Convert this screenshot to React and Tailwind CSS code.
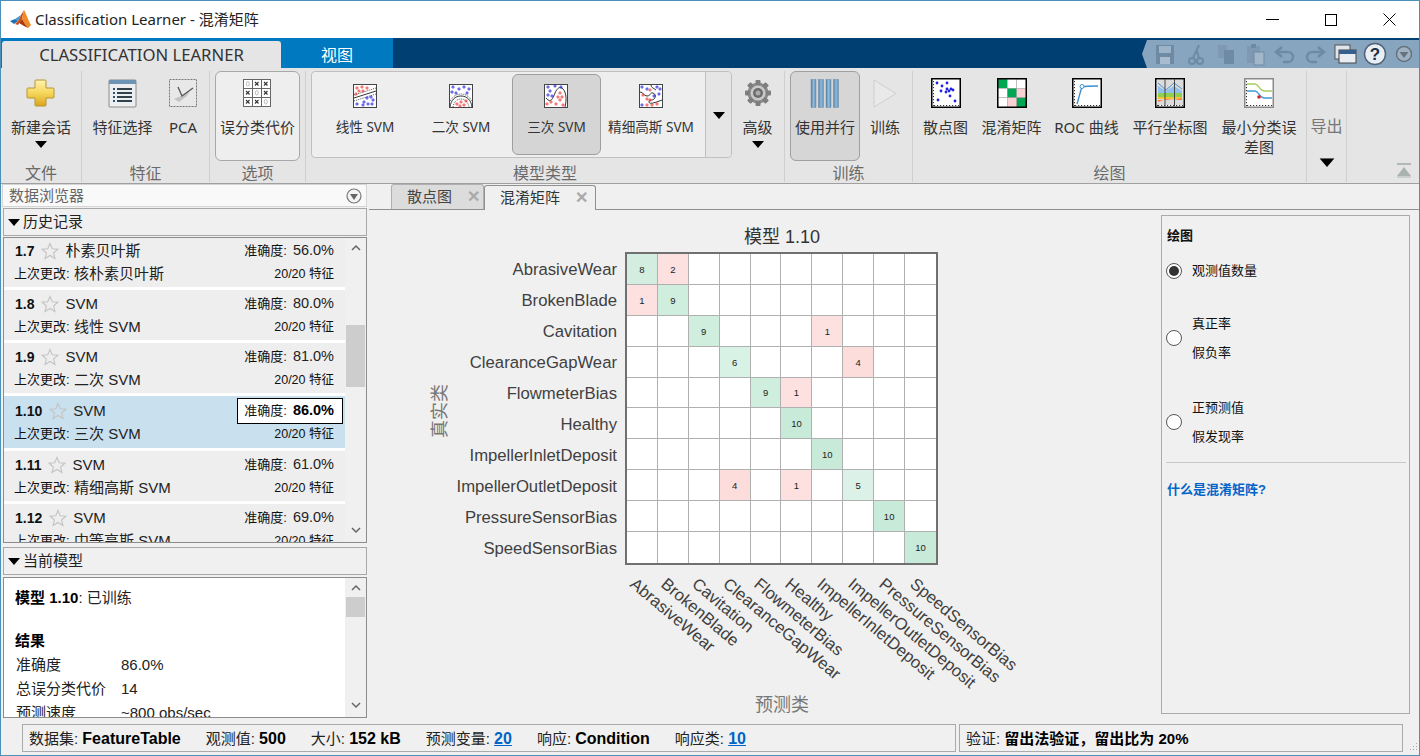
import React from 'react'

const Caret = ({ className = '' }) => (
  <svg width="12" height="7" viewBox="0 0 12 7" className={className}><path d="M0 0h12L6 7z" fill="#000" /></svg>
)

const Dots = ({ pts, color }) => (
  <g fill="none" stroke={color} strokeWidth="0.9">
    {pts.map(([x, y], i) => <circle key={i} cx={x} cy={y} r="1.1" />)}
  </g>
)

const MatlabLogo = () => (
  <svg width="22" height="22" viewBox="0 0 22 22">
    <path d="M0 12l5-2 3 2-4 3z" fill="#1f6fb5" />
    <path d="M5 10l3-2 3-2-3 6z" fill="#3f9ad6" />
    <path d="M8 12l3-6 3-5-2 9-4 6-3-1z" fill="#c9501c" />
    <path d="M14 1c2 3 4 10 7 15l-3 3-3-4-3-5z" fill="#f08a24" />
    <path d="M12 10l3 5 3 4-4-2-5-3z" fill="#a83a12" />
  </svg>
)

const PlusIcon = () => (
  <svg width="30" height="30" viewBox="0 0 30 30">
    <defs>
      <linearGradient id="py" x1="0" y1="0" x2="0" y2="1">
        <stop offset="0" stopColor="#fff3b0" /><stop offset="0.5" stopColor="#f5d75a" /><stop offset="1" stopColor="#d9a520" />
      </linearGradient>
    </defs>
    <path d="M10 2h9a1 1 0 0 1 1 1v7h7a1 1 0 0 1 1 1v8a1 1 0 0 1-1 1h-7v7a1 1 0 0 1-1 1h-9a1 1 0 0 1-1-1v-7H2a1 1 0 0 1-1-1v-8a1 1 0 0 1 1-1h7V3a1 1 0 0 1 1-1z" fill="url(#py)" stroke="#b8962e" />
  </svg>
)

const FeatureIcon = () => (
  <svg width="29" height="29" viewBox="0 0 29 29">
    <rect x="1" y="1" width="27" height="27" rx="1" fill="#eceef0" stroke="#8a8a8a" />
    <rect x="1" y="1" width="27" height="4" fill="#6d94b5" />
    {[9, 13, 17, 21].map((y) => (
      <g key={y}>
        <rect x="5" y={y} width="2" height="2" fill="#26567f" />
        <rect x="9" y={y} width="15" height="2" fill="#33414d" />
      </g>
    ))}
  </svg>
)

const PcaIcon = () => (
  <svg width="28" height="28" viewBox="0 0 28 28">
    <rect x="0.5" y="0.5" width="27" height="27" fill="#e8e8e8" stroke="#777" strokeDasharray="2 1" />
    <path d="M5 20l5 3 8-6 3-5-9 5z" fill="#c4c4c4" />
    <path d="M9 8l4 9 11-8" fill="none" stroke="#5b5b5b" strokeWidth="1.4" />
  </svg>
)

const CostIcon = () => (
  <svg width="28" height="28" viewBox="0 0 28 28">
    <rect x="0.5" y="0.5" width="27" height="27" fill="#fff" stroke="#666" />
    <path d="M9.5 0v28M18.5 0v28M0 9.5h28M0 18.5h28" stroke="#666" />
    {[[0, 1], [0, 2], [1, 0], [1, 2], [2, 0], [2, 1]].map(([r, c]) => (
      <path key={`${r}${c}`} d={`M${3 + c * 9} ${3 + r * 9}l3.5 3.5m0-3.5l-3.5 3.5`} stroke="#333" strokeWidth="1.1" />
    ))}
    {[0, 1, 2].map((i) => <ellipse key={i} cx={4.8 + i * 9} cy={4.8 + i * 9} rx="1.5" ry="2.2" fill="none" stroke="#bbb" />)}
  </svg>
)

const SvmFrame = ({ children }) => (
  <svg width="24" height="24" viewBox="0 0 24 24">
    <rect x="0.5" y="0.5" width="23" height="23" fill="#fff" stroke="#444" />
    {children}
  </svg>
)

const LinearIcon = () => (
  <SvmFrame>
    <path d="M1 14l22-7" stroke="#333" /><path d="M1 17l22-7M1 11l22-7" stroke="#555" strokeDasharray="1 1" />
    <Dots color="#e33" pts={[[4, 4], [9, 3], [14, 4], [6, 7], [10, 7], [3, 10]]} />
    <Dots color="#22d" pts={[[14, 14], [18, 13], [20, 16], [11, 18], [4, 20], [10, 21], [15, 20], [19, 20]]} />
  </SvmFrame>
)
const QuadIcon = () => (
  <SvmFrame>
    <path d="M1 23c1-7 5-11 11-11s10 4 11 11" fill="none" stroke="#333" />
    <path d="M4 23c1-5 4-8 8-8s7 3 8 8M1 17c3-5 7-7 11-7s8 2 11 7" fill="none" stroke="#555" strokeDasharray="1 1" />
    <Dots color="#22d" pts={[[4, 3], [10, 5], [15, 3], [20, 5], [3, 8], [7, 9], [18, 9]]} />
    <Dots color="#e33" pts={[[12, 18], [8, 20], [15, 21], [17, 17], [11, 22]]} />
  </SvmFrame>
)
const CubicIcon = () => (
  <SvmFrame>
    <path d="M2 14c5 6 7 0 9-5s5-7 8-4 4 10 2 18" fill="none" stroke="#333" />
    <Dots color="#22d" pts={[[4, 3], [11, 2], [17, 3], [6, 7], [4, 11], [8, 12]]} />
    <Dots color="#e33" pts={[[16, 9], [14, 13], [18, 13], [16, 16], [7, 18], [3, 20], [12, 20], [19, 21]]} />
  </SvmFrame>
)
const GaussIcon = () => (
  <SvmFrame>
    <path d="M1 8c4 0 3 4 7 4s3-4 6-3 3 4 1 6-5 0-5 3 8 0 13-2M12 1c0 3 3 3 5 5" fill="none" stroke="#333" />
    <Dots color="#22d" pts={[[3, 3], [8, 5], [18, 3], [21, 5], [20, 10], [15, 12], [3, 21]]} />
    <Dots color="#e33" pts={[[11, 6], [4, 11], [8, 15], [11, 16], [8, 21], [13, 21], [18, 20]]} />
  </SvmFrame>
)

const GearIcon = () => (
  <svg width="28" height="28" viewBox="0 0 28 28">
    <circle cx="14" cy="14" r="10.5" fill="#8d8d8d" />
    {[0, 45, 90, 135, 180, 225, 270, 315].map((a) => (
      <rect key={a} x="11.5" y="1" width="5" height="5" rx="1" fill="#7e7e7e" transform={`rotate(${a} 14 14)`} />
    ))}
    <circle cx="14" cy="14" r="7.5" fill="#c9c9c9" />
    <circle cx="14" cy="14" r="5" fill="#6b6b6b" />
    <circle cx="14" cy="14" r="2.5" fill="#aaa" />
  </svg>
)

const ParallelIcon = () => (
  <svg width="29" height="29" viewBox="0 0 29 29">
    <defs>
      <linearGradient id="pb" x1="0" y1="0" x2="1" y2="0">
        <stop offset="0" stopColor="#4f7ea6" /><stop offset="0.5" stopColor="#93bcdc" /><stop offset="1" stopColor="#5f8db3" />
      </linearGradient>
    </defs>
    {[1, 8.5, 16, 23.5].map((x) => <rect key={x} x={x} y="0.5" width="5" height="28" fill="url(#pb)" stroke="#6f8ba3" strokeWidth="0.5" />)}
  </svg>
)

const PlayIcon = () => (
  <svg width="26" height="29" viewBox="0 0 26 29"><path d="M2 1l22 13.5L2 28z" fill="#e9e9e9" stroke="#cfcfcf" /></svg>
)

const PlotFrame = ({ children, stroke = '#000' }) => (
  <svg width="30" height="30" viewBox="0 0 30 30">
    <rect x="0.75" y="0.75" width="28.5" height="28.5" fill="#fff" stroke={stroke} strokeWidth="1.5" />
    <path d="M2.5 3v25M3 27.5h25" stroke="#333" strokeDasharray="1.2 1.8" />
    {children}
  </svg>
)

const ScatterIcon = () => (
  <PlotFrame>
    {[[6, 5], [11, 8], [16, 5], [10, 13], [15, 14], [18, 13], [16, 11], [22, 12], [20, 11], [7, 22], [19, 18], [24, 23]].map(([x, y], i) => (
      <circle key={i} cx={x} cy={y} r="1.4" fill="#1f22e0" />
    ))}
  </PlotFrame>
)

const ConfusionIcon = () => {
  const cells = ['#00a651', '#fff', '#fff', '#fff', '#00a651', '#f9d3d3', '#fff', '#f9d3d3', '#00a651']
  return (
    <svg width="30" height="30" viewBox="0 0 30 30">
      {cells.map((c, i) => <rect key={i} x={1 + (i % 3) * 9.4} y={1 + Math.floor(i / 3) * 9.4} width="9.4" height="9.4" fill={c} stroke="#999" strokeWidth="0.4" />)}
      <rect x="0.75" y="0.75" width="28.5" height="28.5" fill="none" stroke="#000" strokeWidth="1.5" />
    </svg>
  )
}

const RocIcon = () => (
  <PlotFrame>
    <path d="M5 26c2-6 3-12 5-17 4-1 9-1 16-1" fill="none" stroke="#3a8fd0" strokeWidth="1.4" />
    <circle cx="10" cy="8.5" r="2" fill="#fff" stroke="#3a8fd0" />
  </PlotFrame>
)

const CoordsIcon = () => (
  <PlotFrame>
    <rect x="2" y="2" width="26" height="25" fill="#dcdcdc" />
    <path d="M3 8l8 5 8-5 8 5-1 5H3z" fill="#8fc0ee" />
    <path d="M3 5l8 7 8-7 8 6" fill="none" stroke="#4d90d8" />
    <rect x="3" y="15" width="24" height="4" fill="#8fd14f" />
    <rect x="3" y="19" width="24" height="2" fill="#f7c530" />
    <path d="M3 24l8-3 8 1 8-2v2H3z" fill="#f47f3e" />
    <path d="M10 1v27M19.5 1v27" stroke="#444" />
  </PlotFrame>
)

const MinErrIcon = () => (
  <PlotFrame stroke="#8a8a8a">
    <path d="M3 6h8c4 0 4 7 9 7h8" fill="none" stroke="#a5cf5c" strokeWidth="1.3" />
    <path d="M3 13h8c4 0 4 7 9 7h8" fill="none" stroke="#3f9bd1" strokeWidth="1.3" />
    <circle cx="15" cy="19" r="1.8" fill="#d8232a" />
  </PlotFrame>
)

const RibbonButton = ({ icon, label, caret, className = '', textClass = 'text-[15px]', gap = 'mt-[5px]' }) => (
  <div className={`flex flex-col items-center shrink-0 ${className}`}>
    <div className="h-[38px] flex items-center justify-center">{icon}</div>
    <div className={`leading-[20px] text-[#333] text-center ${gap} ${textClass}`}>{label}</div>
    {caret && <Caret className="mt-[4px]" />}
  </div>
)

const RibbonSection = ({ title, width, children }) => (
  <div className="flex flex-col h-[111px] border-r border-[#cfcfcf] shrink-0" style={{ width }}>
    <div className="h-[90px] flex shrink-0">{children}</div>
    <div className="text-center text-[16px] leading-[18px] text-[#6a6a6a] mt-[3px]">{title}</div>
  </div>
)

const galleryText = 'text-[13.6px] whitespace-nowrap'

const Ribbon = () => (
  <div className="h-[116px] bg-[#e5e5e5] border-b border-[#a0a0a0] flex pt-[3px] shrink-0 font-['Noto_Sans','Noto_Sans_CJK_SC',sans-serif]">
    <RibbonSection title="文件" width={81}>
      <RibbonButton icon={<PlusIcon />} label="新建会话" caret className="w-full pt-[3px]" />
    </RibbonSection>
    <RibbonSection title="特征" width={128}>
      <RibbonButton icon={<FeatureIcon />} label="特征选择" className="w-[81px] pt-[3px]" />
      <RibbonButton icon={<PcaIcon />} label="PCA" className="w-[40px] pt-[3px]" />
    </RibbonSection>
    <RibbonSection title="选项" width={96}>
      <div className="ml-[5px] w-[85px] h-[90px] rounded-[6px] border border-[#a8a8a8] bg-[#eeeeee] flex justify-center pt-[2px]">
        <RibbonButton icon={<CostIcon />} label="误分类代价" />
      </div>
    </RibbonSection>
    <RibbonSection title="模型类型" width={479}>
      <div className="ml-[5px] w-[421px] h-[87px] flex rounded-[4px] border border-[#c0c0c0] bg-[#eeeeee]">
        <div className="flex-1 flex items-start pl-[5px] pt-[2px]">
          <RibbonButton icon={<LinearIcon />} label="线性 SVM" textClass={galleryText} gap="mt-[2px]" className="w-[96px] pt-[3px]" />
          <RibbonButton icon={<QuadIcon />} label="二次 SVM" textClass={galleryText} gap="mt-[2px]" className="w-[96px] pt-[3px]" />
          <div className="ml-[3px] w-[89px] h-[81px] rounded-[6px] border border-[#9e9e9e] bg-[#d5d5d5] flex justify-center pt-[2px]">
            <RibbonButton icon={<CubicIcon />} label="三次 SVM" textClass={galleryText} gap="mt-[2px]" />
          </div>
          <RibbonButton icon={<GaussIcon />} label="精细高斯 SVM" textClass={galleryText} gap="mt-[2px]" className="w-[100px] pt-[3px]" />
        </div>
        <div className="w-[26px] border-l border-[#c0c0c0] bg-[#e5e5e5] rounded-r-[4px] flex justify-center pt-[40px]">
          <Caret />
        </div>
      </div>
      <RibbonButton icon={<GearIcon />} label="高级" caret className="w-[51px] pt-[3px]" />
    </RibbonSection>
    <RibbonSection title="训练" width={128}>
      <div className="ml-[5px] w-[70px] h-[90px] rounded-[6px] border border-[#a0a0a0] bg-[#d6d6d6] flex justify-center pt-[2px]">
        <RibbonButton icon={<ParallelIcon />} label="使用并行" />
      </div>
      <RibbonButton icon={<PlayIcon />} label="训练" className="w-[50px] pt-[3px]" />
    </RibbonSection>
    <RibbonSection title="绘图" width={394}>
      <RibbonButton icon={<ScatterIcon />} label="散点图" className="w-[65px] pt-[3px]" />
      <RibbonButton icon={<ConfusionIcon />} label="混淆矩阵" className="w-[67px] pt-[3px]" />
      <RibbonButton icon={<RocIcon />} label="ROC 曲线" className="w-[83px] pt-[3px]" />
      <RibbonButton icon={<CoordsIcon />} label="平行坐标图" className="w-[84px] pt-[3px]" />
      <RibbonButton icon={<MinErrIcon />} label="最小分类误差图" textClass="text-[15px] w-[78px]" className="w-[94px] pt-[3px]" />
    </RibbonSection>
    <div className="flex flex-col items-center w-[40px] h-[111px] border-r border-[#cfcfcf] pt-[45px] text-[16px] leading-[20px] text-[#777] shrink-0">
      导出
      <Caret className="mt-[23px] scale-125" />
    </div>
    <div className="flex-1 flex justify-end items-end pr-[7px] pb-[5px]">
      <svg width="16" height="15" viewBox="0 0 16 15"><rect x="1" y="0" width="14" height="2" fill="#b0b8b8" /><path d="M8 4l7 9H1z" fill="#a9b2b0" /><rect x="1" y="13" width="14" height="2" fill="#c9cfcd" /></svg>
    </div>
  </div>
)

const qaColor = '#6f8aa5'

const QuickAccess = () => (
  <div className="ml-auto h-[28px] w-[277px] mt-[2px] bg-[#88a5bf] [clip-path:polygon(5px_0,100%_0,100%_100%,5px_100%,0_50%)] flex items-center pl-[11px] gap-[6px]">
    <svg width="24" height="24" viewBox="0 0 24 24"><path d="M3 3h18v19H3z" fill={qaColor} /><rect x="6" y="4" width="12" height="7" fill="#9db3c8" /><rect x="7" y="15" width="10" height="7" fill="#a9bccf" /></svg>
    <svg width="24" height="24" viewBox="0 0 24 24" fill="none" stroke={qaColor} strokeWidth="2"><circle cx="9" cy="19" r="3" /><circle cx="17" cy="19" r="3" /><path d="M10 16L16 3M16 16L14 9" /></svg>
    <svg width="24" height="24" viewBox="0 0 24 24" fill="#7f99b2"><rect x="5" y="3" width="9" height="13" /><rect x="11" y="8" width="10" height="14" fill="#6f8aa5" /></svg>
    <svg width="24" height="24" viewBox="0 0 24 24"><rect x="4" y="4" width="13" height="17" fill="#7f99b2" /><rect x="8" y="2" width="5" height="4" fill="#6f8aa5" /><rect x="11" y="10" width="10" height="13" fill="#a3b7ca" stroke="#6f8aa5" /></svg>
    <svg width="24" height="24" viewBox="0 0 24 24" fill="none" stroke={qaColor} strokeWidth="2.5"><path d="M9 5L3 10l6 5" /><path d="M4 10h11a5 5 0 0 1 0 10h-5" /></svg>
    <svg width="24" height="24" viewBox="0 0 24 24" fill="none" stroke={qaColor} strokeWidth="2.5"><path d="M15 5l6 5-6 5" /><path d="M20 10H9a5 5 0 0 0 0 10h5" /></svg>
    <svg width="24" height="24" viewBox="0 0 24 24"><rect x="2" y="3" width="15" height="14" fill="#dfe5ea" stroke="#555" /><rect x="6" y="8" width="17" height="13" fill="#e8edf1" stroke="#444" /><rect x="6" y="8" width="17" height="4" fill="#36618f" /></svg>
    <svg width="24" height="24" viewBox="0 0 24 24"><circle cx="12" cy="12" r="10.5" fill="#e8eef3" stroke="#50657a" strokeWidth="1.5" /><text x="12" y="18" textAnchor="middle" fontSize="17" fontWeight="700" fontFamily="Liberation Sans, sans-serif" fill="#1e2e44">?</text></svg>
    <svg width="20" height="20" viewBox="0 0 20 20" className="ml-[1px]"><circle cx="10" cy="10" r="7.5" fill="#9fb2c3" stroke="#66727c" strokeWidth="1.5" /><path d="M5.5 8h9L10 14z" fill="#66727c" /></svg>
  </div>
)

const TitleBar = () => (
  <div className="h-[37px] bg-white flex items-center shrink-0">
    <div className="ml-[9px] mr-[3px] flex"><MatlabLogo /></div>
    <div className="text-[15px] text-[#222] font-['Noto_Sans','Noto_Sans_CJK_SC',sans-serif]">Classification Learner - 混淆矩阵</div>
    <div className="ml-auto flex h-full">
      <div className="w-[58px] flex items-center justify-center"><div className="w-[13px] h-px bg-black" /></div>
      <div className="w-[59px] flex items-center justify-center"><div className="w-[12px] h-[12px] border border-black" /></div>
      <div className="w-[59px] flex items-center justify-center">
        <svg width="13" height="13" viewBox="0 0 13 13"><path d="M0.5 0.5l12 12m0-12l-12 12" stroke="#000" fill="none" /></svg>
      </div>
    </div>
  </div>
)

const TabBar = () => (
  <div className="h-[30px] bg-[#003f72] flex items-end shrink-0 font-['Noto_Sans','Noto_Sans_CJK_SC',sans-serif]">
    <div className="h-[30px] w-[392px] bg-[#0079c1] flex items-end pl-px">
      <div className="w-[279px] h-[27px] bg-[#e5e5e5] rounded-t-[3px] text-center text-[16.7px] leading-[28px] text-[#333]">CLASSIFICATION LEARNER</div>
      <div className="flex-1 h-[27px] text-center text-[16px] leading-[29px] text-white">视图</div>
    </div>
    <QuickAccess />
  </div>
)

const models = [
  { id: '1.7', name: '朴素贝叶斯', acc: '56.0%', change: '核朴素贝叶斯', h: 'h-[50px] -mt-px' },
  { id: '1.8', name: 'SVM', acc: '80.0%', change: '线性 SVM', h: 'h-[50px]' },
  { id: '1.9', name: 'SVM', acc: '81.0%', change: '二次 SVM', h: 'h-[50px]' },
  { id: '1.10', name: 'SVM', acc: '86.0%', change: '三次 SVM', h: 'h-[52px] pt-px', selected: true },
  { id: '1.11', name: 'SVM', acc: '61.0%', change: '精细高斯 SVM', h: 'h-[50px]' },
  { id: '1.12', name: 'SVM', acc: '69.0%', change: '中等高斯 SVM', h: 'h-[50px]' },
]

const Star = () => (
  <svg width="18" height="18" viewBox="0 0 24 24" className="ml-[7px] mr-[6px] shrink-0">
    <path d="M12 2l3 7 7.5.7-5.7 5 1.8 7.3-6.6-4-6.6 4 1.8-7.3-5.7-5L9 9z" fill="none" stroke="#c4c4c4" strokeWidth="1.5" />
  </svg>
)

const ModelRow = ({ model }) => (
  <div className={`${model.h} shrink-0 ${model.selected ? 'bg-[#c9e0ef]' : 'bg-[#eeeeee]'} pl-[11px] flex flex-col`}>
    <div className="flex items-center h-[28px]">
      <span className="text-[14px] font-bold text-[#111]">{model.id}</span>
      <Star />
      <span className="text-[15px] text-[#222]">{model.name}</span>
      <div className={`ml-auto h-[26px] w-[106px] mr-[2px] flex items-center justify-end pr-[8px] border ${model.selected ? 'bg-white border-black' : 'border-transparent'}`}>
        <span className="text-[13px] text-[#111]">准确度:</span>
        <span className={`text-[14.5px] ml-[6px] ${model.selected ? 'font-bold text-black' : 'text-[#222]'}`}>{model.acc}</span>
      </div>
    </div>
    <div className="flex items-center h-[20px] -mt-[1px] -ml-px">
      <span className="text-[13px] text-[#111] w-[60px] shrink-0 whitespace-nowrap">上次更改:</span>
      <span className="text-[15px] text-[#222]">{model.change}</span>
      <span className="ml-auto mr-[11px] text-[12.5px] text-[#111]">20/20 特征</span>
    </div>
  </div>
)

const ScrollBar = ({ thumbClass }) => (
  <div className="w-[21px] shrink-0 bg-[#f0f0f0] flex flex-col items-center relative">
    <svg width="10" height="7" viewBox="0 0 10 7" className="mt-[6px]"><path d="M1 6l4-4 4 4" fill="none" stroke="#666" strokeWidth="1.5" /></svg>
    <div className={`w-[19px] bg-[#cdcdcd] ${thumbClass}`} />
    <svg width="10" height="7" viewBox="0 0 10 7" className="mt-auto mb-[8px]"><path d="M1 1l4 4 4-4" fill="none" stroke="#666" strokeWidth="1.5" /></svg>
  </div>
)

const SectionHeader = ({ title, className = '' }) => (
  <div className={`h-[28px] border border-[#a8a8a8] bg-[#f0f0f0] flex items-center pl-[4px] gap-[3px] ml-[1px] shrink-0 ${className}`}>
    <Caret />
    <span className="text-[15px] text-[#222]">{title}</span>
  </div>
)

const LeftPanel = () => (
  <div className="w-[366px] shrink-0 flex flex-col pl-[1px]">
    <div className="h-[23px] bg-[#f9f9f9] border border-[#d5d5d5] flex items-center pl-[6px] pr-[4px] shrink-0">
      <span className="text-[15px] text-[#666] pt-[2px]">数据浏览器</span>
      <svg width="16" height="16" viewBox="0 0 16 16" className="ml-auto"><circle cx="8" cy="8" r="7" fill="#f4f4f4" stroke="#777" strokeWidth="1.2" /><path d="M4 6h8l-4 6z" fill="#666" /></svg>
    </div>
    <SectionHeader title="历史记录" className="mt-[1px]" />
    <div className="h-[306px] mt-[1px] ml-[1px] border border-[#8c8c8c] flex bg-white overflow-hidden shrink-0">
      <div className="flex-1 flex flex-col gap-[3px] overflow-hidden">
        {models.map((m) => <ModelRow key={m.id} model={m} />)}
      </div>
      <ScrollBar thumbClass="h-[62px] mt-[74px]" />
    </div>
    <SectionHeader title="当前模型" className="mt-[4px]" />
    <div className="h-[141px] mt-[2px] ml-[1px] border border-[#8c8c8c] flex bg-white overflow-hidden shrink-0">
      <div className="flex-1 pl-[11px] pt-[9px] overflow-hidden text-[15px] text-[#222]">
        <div className="h-[21px] leading-[21px]"><b className="text-black">模型 1.10</b>: 已训练</div>
        <div className="h-[20px]" />
        <div className="h-[25px] pt-[2px] font-bold text-black">结果</div>
        {[['准确度', '86.0%'], ['总误分类代价', '14'], ['预测速度', '~800 obs/sec']].map(([k, v]) => (
          <div key={k} className="flex h-[24px] items-center pl-[1px]"><span className="w-[105px] shrink-0">{k}</span><span className="whitespace-nowrap">{v}</span></div>
        ))}
      </div>
      <ScrollBar thumbClass="h-[20px] mt-[6px]" />
    </div>
  </div>
)

const labels = ['AbrasiveWear', 'BrokenBlade', 'Cavitation', 'ClearanceGapWear', 'FlowmeterBias', 'Healthy', 'ImpellerInletDeposit', 'ImpellerOutletDeposit', 'PressureSensorBias', 'SpeedSensorBias']

const matrix = {
  '0-0': [8, 'bg-[#d3eee0]'], '0-1': [2, 'bg-[#fde0e0]'],
  '1-0': [1, 'bg-[#fde0e0]'], '1-1': [9, 'bg-[#cfeedd]'],
  '2-2': [9, 'bg-[#cfeedd]'], '2-6': [1, 'bg-[#fde0e0]'],
  '3-3': [6, 'bg-[#d9f2e6]'], '3-7': [4, 'bg-[#fddcdc]'],
  '4-4': [9, 'bg-[#cfeedd]'], '4-5': [1, 'bg-[#fde0e0]'],
  '5-5': [10, 'bg-[#c8ebd9]'],
  '6-6': [10, 'bg-[#c8ebd9]'],
  '7-3': [4, 'bg-[#fddcdc]'], '7-5': [1, 'bg-[#fde0e0]'], '7-7': [5, 'bg-[#dcf2e8]'],
  '8-8': [10, 'bg-[#c8ebd9]'],
  '9-9': [10, 'bg-[#c8ebd9]'],
}

const Chart = () => (
  <div className="w-[792px] shrink-0 flex flex-col font-['Liberation_Sans','Noto_Sans_CJK_SC',sans-serif]">
    <div className="ml-[257px] w-[312px] h-[24px] mt-[15px] mb-[3px] text-center text-[18px] leading-[24px] text-[#333]">模型 1.10</div>
    <div className="flex ml-[61px] h-[313px]">
      <div className="w-[20px] flex items-center justify-center pt-[4px]">
        <span className="-rotate-90 whitespace-nowrap text-[18px] leading-[20px] text-[#777]">真实类</span>
      </div>
      <div className="w-[167px] h-[310px] mt-[2px] flex flex-col shrink-0">
        {labels.map((l) => (
          <div key={l} className="flex-1 flex items-center justify-end text-[16.7px] text-[#404040] whitespace-nowrap">{l}</div>
        ))}
      </div>
      <div className="ml-[8px] w-[313px] h-[313px] border-2 border-[#707070] grid grid-cols-10 grid-rows-10 bg-white">
        {labels.map((_, r) => labels.map((__, c) => {
          const cell = matrix[`${r}-${c}`]
          return (
            <div key={`${r}-${c}`} className={`flex items-center justify-center pt-[2px] text-[9.5px] text-[#222] ${c < 9 ? 'border-r' : ''} ${r < 9 ? 'border-b' : ''} border-[#b0b0b0] ${cell ? cell[1] : ''}`}>
              {cell ? cell[0] : ''}
            </div>
          )
        }))}
      </div>
    </div>
    <div className="flex ml-[269px] mt-[10px] h-[118px]">
      {labels.map((l) => (
        <div key={l} className="w-[31.1px] shrink-0">
          <div className="w-0 whitespace-nowrap origin-top-left rotate-[40deg] text-[16.7px] leading-[18px] text-[#404040]">{l}</div>
        </div>
      ))}
    </div>
    <div className="ml-[257px] w-[312px] text-center text-[18px] leading-[24px] text-[#777]">预测类</div>
  </div>
)

const Radio = ({ on }) => (
  <div className="w-[16px] h-[16px] rounded-full border border-[#555] bg-white flex items-center justify-center shrink-0">
    {on && <div className="w-[10px] h-[10px] rounded-full bg-[#333]" />}
  </div>
)

const RightPanel = () => (
  <div className="w-[249px] h-[499px] mt-[5px] shrink-0 border border-[#aaaaaa] flex flex-col text-[13px] text-[#111] pl-[4px] pr-[3px]">
    <div className="font-bold h-[20px] mt-[10px] leading-[20px] pl-[1px]">绘图</div>
    <div className="flex items-center gap-[10px] mt-[14px] h-[20px] pt-px"><Radio on /><span>观测值数量</span></div>
    <div className="flex items-center gap-[10px] mt-[29px] h-[58px]">
      <Radio />
      <div className="flex flex-col gap-[11px] leading-[18px]"><span>真正率</span><span>假负率</span></div>
    </div>
    <div className="flex items-center gap-[10px] mt-[26px] h-[58px]">
      <Radio />
      <div className="flex flex-col gap-[11px] leading-[18px]"><span>正预测值</span><span>假发现率</span></div>
    </div>
    <div className="h-px bg-[#c8c8c8] mt-[11px]" />
    <div className="font-bold text-[#0064c8] mt-[17px] leading-[20px] pl-[1px]">什么是混淆矩阵?</div>
  </div>
)

const StatusBar = () => (
  <div className="h-[28px] ml-[21px] flex gap-[3px] text-[15px] text-[#222] shrink-0">
    <div className="w-[934px] border border-[#aaaaaa] flex items-center pl-[6px] pt-[2px] gap-[25px] whitespace-nowrap">
      <span>数据集: <b className="text-black text-[16px]">FeatureTable</b></span>
      <span>观测值: <b className="text-black text-[16px]">500</b></span>
      <span>大小: <b className="text-black text-[16px]">152 kB</b></span>
      <span>预测变量: <b className="text-[#0064c8] underline text-[16px]">20</b></span>
      <span>响应: <b className="text-black text-[16px]">Condition</b></span>
      <span>响应类: <b className="text-[#0064c8] underline text-[16px]">10</b></span>
    </div>
    <div className="w-[444px] border border-[#aaaaaa] flex items-center pl-[6px] pt-[2px] whitespace-nowrap">
      <span>验证: <b className="text-black">留出法验证，留出比为 20%</b></span>
    </div>
    <svg width="10" height="10" viewBox="0 0 10 10" className="ml-auto mt-auto mr-px">
      <path d="M8 1h1v1H8zM5 4h1v1H5zM8 4h1v1H8zM2 7h1v1H2zM5 7h1v1H5zM8 7h1v1H8z" fill="#a8a8a8" />
    </svg>
  </div>
)

export default function App() {
  return (
    <div className="w-[1420px] h-[756px] overflow-hidden border border-[#4a90b8] bg-[#f0f0f0] flex flex-col font-['Liberation_Sans','Noto_Sans_CJK_SC',sans-serif]">
      <TitleBar />
      <TabBar />
      <Ribbon />
      <div className="h-[540px] flex shrink-0">
        <LeftPanel />
        <div className="flex-1 flex flex-col pl-[2px]">
          <div className="h-[26px] border-b border-[#909090] flex items-end pl-[22px] text-[15px] shrink-0">
            <div className="w-[93px] h-[25px] border border-b-0 border-[#b0b0b0] rounded-t-[3px] bg-[#dcdcdc] flex items-center pl-[15px] text-[#444]">
              散点图<span className="ml-auto mr-[3px] text-[#aaa] text-[16px] font-bold">✕</span>
            </div>
            <div className="w-[112px] h-[25px] border border-b-0 border-[#909090] rounded-t-[3px] bg-[#f0f0f0] flex items-center pl-[15px] text-[#333] -mb-px">
              混淆矩阵<span className="ml-auto mr-[7px] text-[#aaa] text-[16px] font-bold">✕</span>
            </div>
          </div>
          <div className="flex">
            <Chart />
            <RightPanel />
          </div>
        </div>
      </div>
      <StatusBar />
    </div>
  )
}
